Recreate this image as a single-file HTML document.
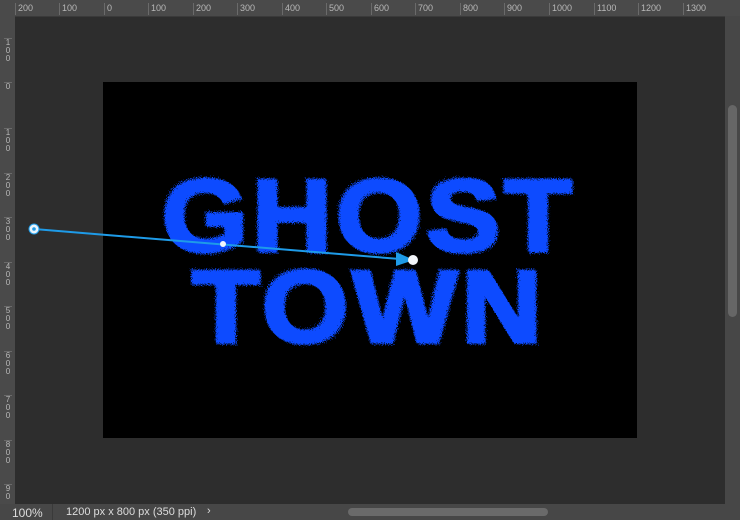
<!DOCTYPE html>
<html><head><meta charset="utf-8"><style>
html,body{margin:0;padding:0;width:740px;height:520px;overflow:hidden;background:#2d2d2d;font-family:"Liberation Sans",sans-serif}
.abs{position:absolute}
#top{left:0;top:0;width:740px;height:16px;background:#4a4a4a;border-bottom:1px solid #3a3a3a}
#left{left:0;top:16px;width:15px;height:488px;background:#4a4a4a}
.tl{position:absolute;top:3px;font-size:9px;color:#b8b8b8;border-left:1px solid #6a6a6a;padding-left:2px;height:12px;line-height:10px}
.ll{position:absolute;left:4px;font-size:8px;color:#b8b8b8;line-height:8px;width:8px;text-align:center;border-top:1px solid #6a6a6a}
#rs{left:725px;top:16px;width:15px;height:488px;background:#474747}
#rthumb{left:728px;top:105px;width:9px;height:212px;background:#666;border-radius:5px}
#bot{left:0;top:504px;width:740px;height:16px;background:#474747;font-size:11px;color:#ddd}
#hthumb{left:348px;top:508px;width:200px;height:8px;background:#6a6a6a;border-radius:4px}
#doc{left:103px;top:82px;width:534px;height:356px;background:#000}
</style></head><body>
<div id="top" class="abs">
<span class="tl" style="left:15px">200</span><span class="tl" style="left:59px">100</span><span class="tl" style="left:104px">0</span><span class="tl" style="left:148px">100</span><span class="tl" style="left:193px">200</span><span class="tl" style="left:237px">300</span><span class="tl" style="left:282px">400</span><span class="tl" style="left:326px">500</span><span class="tl" style="left:371px">600</span><span class="tl" style="left:415px">700</span><span class="tl" style="left:460px">800</span><span class="tl" style="left:504px">900</span><span class="tl" style="left:549px">1000</span><span class="tl" style="left:594px">1100</span><span class="tl" style="left:638px">1200</span><span class="tl" style="left:683px">1300</span>
</div>
<div id="left" class="abs">
<span class="ll" style="top:22px">1<br>0<br>0</span>
<span class="ll" style="top:66px">0</span>
<span class="ll" style="top:112px">1<br>0<br>0</span>
<span class="ll" style="top:157px">2<br>0<br>0</span>
<span class="ll" style="top:201px">3<br>0<br>0</span>
<span class="ll" style="top:246px">4<br>0<br>0</span>
<span class="ll" style="top:290px">5<br>0<br>0</span>
<span class="ll" style="top:335px">6<br>0<br>0</span>
<span class="ll" style="top:379px">7<br>0<br>0</span>
<span class="ll" style="top:424px">8<br>0<br>0</span>
<span class="ll" style="top:468px">9<br>0</span>
</div>
<div id="doc" class="abs"></div>
<div id="rs" class="abs"></div>
<div id="rthumb" class="abs"></div>
<div id="bot" class="abs"><span class="abs" style="left:12px;top:2px;font-size:12px">100%</span><div class="abs" style="left:52px;top:0;width:1px;height:16px;background:#3a3a3a"></div><span class="abs" style="left:66px;top:2px">1200 px x 800 px (350 ppi)</span><span class="abs" style="left:207px;top:1px">›</span></div>
<div id="hthumb" class="abs"></div>
<svg class="abs" style="left:0;top:0" width="740" height="520">
<defs><filter id="f" x="-10%" y="-20%" width="120%" height="140%"><feTurbulence type="fractalNoise" baseFrequency="1.2" numOctaves="1" result="n"/><feDisplacementMap in="SourceGraphic" in2="n" scale="10"/></filter></defs>
<g filter="url(#f)" fill="#0b4cff" stroke="#0b4cff" stroke-width="4" font-family="Liberation Sans" font-weight="bold">
<text x="162" y="251" font-size="102" textLength="414" lengthAdjust="spacingAndGlyphs" letter-spacing="4">GHOST</text>
<text x="192" y="342" font-size="102" textLength="354" lengthAdjust="spacingAndGlyphs" letter-spacing="4">TOWN</text>
</g>
<line x1="34" y1="229" x2="400" y2="259" stroke="#1e9be8" stroke-width="2"/>
<polygon points="396,252 414,260 396,266" fill="#1e9be8"/>
<circle cx="413" cy="260" r="5" fill="#f2f6fa"/>
<circle cx="223" cy="244" r="3" fill="#f2f6fa"/>
<circle cx="34" cy="229" r="5" fill="#e8f4fc" stroke="#1e9be8" stroke-width="1"/>
<circle cx="34" cy="229" r="1.8" fill="#1e9be8"/>
</svg>
</body></html>
